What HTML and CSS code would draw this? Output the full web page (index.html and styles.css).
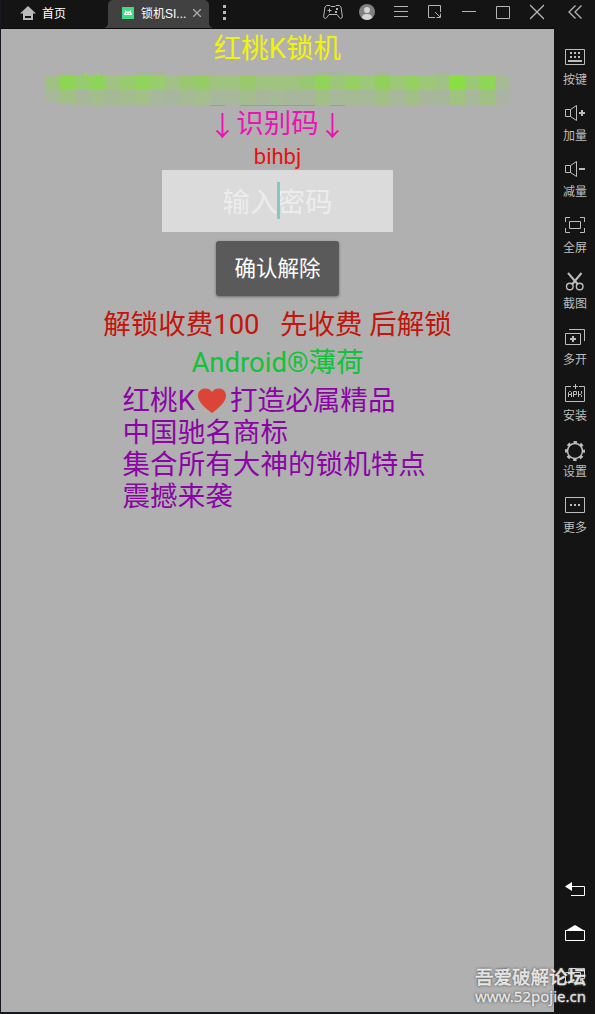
FILE: index.html
```html
<!DOCTYPE html>
<html lang="zh-CN">
<head>
<meta charset="utf-8">
<title>锁机</title>
<link rel="stylesheet" href="styles.css">
</head>
<body>
<div class="window">
  <div class="main">
    <header class="titlebar">
      <div class="home">
        <svg width="16" height="14" viewBox="0 0 16 14"><path fill="#b9b9b9" fill-rule="evenodd" d="M8 0L16 7.500H13V14H3V7.500H0ZM5 10H11V12H5Z"/></svg>
        <span>首页</span>
      </div>
      <div class="tab">
        <svg width="12" height="12" viewBox="0 0 12 12"><rect width="12" height="12" fill="#3ddc84"/><path fill="#fff" d="M2 8a4 3.800 0 0 1 8 0Z"/><path stroke="#fff" stroke-width=".8" d="M3 3l1 2M9 3L8 5"/><path fill="#3ddc84" d="M4 6h1v1H4zM7 6h1v1H7z"/></svg>
        <span class="tabname">锁机SI...</span>
        <svg class="tabclose" width="8" height="8" viewBox="0 0 8 8"><path d="M0 0L8 8M8 0L0 8" stroke="#aaa" stroke-width="1.300"/></svg>
      </div>
      <svg class="dots" width="3" height="15" viewBox="0 0 3 15"><path fill="#b9b9b9" d="M0 0h3v3H0zM0 6h3v3H0zM0 12h3v3H0z"/></svg>
      <div class="tools">
        <svg width="20" height="24" viewBox="0 0 20 24" fill="none" stroke="#b5b5b5"><path d="M3.500 5.500H7L8 6.500H12L13 5.500H16.500L18 7L19.300 16Q19.500 18.500 17.500 18.500Q16.500 18.500 14 14.500H6Q3.500 18.500 2.500 18.500Q.5 18.500 .7 16L2 7Z"/><path d="M4.500 10.500h4M6.500 8.500v4"/><path fill="#b5b5b5" stroke="none" d="M12 11h2v2h-2zM13 8h2v2h-2z"/></svg>
        <svg width="16" height="24" viewBox="0 0 16 24"><circle cx="8" cy="12" r="8" fill="#818181"/><circle cx="8" cy="10" r="3" fill="#d6d6d6"/><path fill="#d6d6d6" d="M3 18q0-4 5-4t5 4q-5 4-10 0"/></svg>
        <svg width="14" height="24" viewBox="0 0 14 24" stroke="#b5b5b5"><path d="M0 6.500h14M0 11.500h14M0 16.500h14"/></svg>
        <svg width="14" height="24" viewBox="0 0 14 24" fill="none" stroke="#b5b5b5"><path d="M7 17.500H.5V5.500H12.500V12M7 12L12 17M12.500 13.500V17.500H8.500"/></svg>
        <svg width="14" height="24" viewBox="0 0 14 24" stroke="#b5b5b5"><path d="M0 11.500h14"/></svg>
        <svg width="14" height="24" viewBox="0 0 14 24" fill="none" stroke="#b5b5b5"><path d="M.5 6.500h13v12H.5z"/></svg>
        <svg width="14" height="24" viewBox="0 0 14 24" stroke="#b5b5b5" stroke-width="1.300"><path d="M0 5L14 19M14 5L0 19"/></svg>
      </div>
    </header>
    <main class="screen">
      <h1 class="title">红桃K锁机</h1>
      <svg class="mosaic" width="465" height="34" viewBox="0 0 465 34" shape-rendering="crispEdges">
        <path fill="#a9b69f" d="M15 2h15v2H15zM90 0h30v4H90zM270 1h30v3H270zM330 0h15v4H330zM390 1h15v3H390z"/>
        <g id="cells"></g>
        <path fill="#8cdf4d" d="M39 2h3v2h-3zM52 2h3v2h-3z"/>
        <path fill="#b0b0b0" d="M0 31h10v1h16v2H0z"/>
        <path fill="#c084aa" d="M165 34h15v1h-15zM195 34h75v1h-75zM285 34h15v1h-15z"/>
      </svg>
      <div class="label"><i>↓</i>识别码<i>↓</i></div>
      <div class="code">bihbj</div>
      <div class="field">输入密码<span class="caret"></span></div>
      <button class="confirm">确认解除</button>
      <div class="fee">解锁收费100&nbsp;&nbsp; 先收费 后解锁</div>
      <div class="author">Android®薄荷</div>
      <div class="notes">
        <p>红桃K<svg class="heart" width="30" height="27" viewBox="0 0 30 27"><path fill="#db4437" d="M15 26C10 22 1 16 1 8.500C1 1 11 -1 15 5C19 -1 29 1 29 8.500C29 16 20 22 15 26Z"/></svg>打造必属精品</p>
        <p>中国驰名商标</p>
        <p>集合所有大神的锁机特点</p>
        <p>震撼来袭</p>
      </div>
    </main>
  </div>
  <aside class="sidebar">
    <svg class="collapse" width="14" height="14" viewBox="0 0 14 14" fill="none" stroke="#b5b5b5" stroke-width="1.300"><path d="M7.500 .5L1 7L7.500 13.500M13.500 .5L7 7L13.500 13.500"/></svg>
    <nav class="actions">
      <div class="action"><svg viewBox="0 0 20 20"><path d="M.5 2.500h19v15H.5z"/><path class="solid" d="M5 5h2v2H5zM9 5h2v2H9zM13 5h2v2h-2zM5 9h2v2H5zM9 9h2v2H9zM13 9h2v2h-2zM3 13h14v2H3z"/></svg><span>按键</span></div>
      <div class="action"><svg viewBox="0 0 20 20"><path d="M5.500 6.500H.5v7h5zM5.500 6.500L11.500 2.500v15L5.500 13.500"/><path class="solid" d="M14 9h2V7h2v2h2v2h-2v2h-2v-2h-2z"/></svg><span>加量</span></div>
      <div class="action"><svg viewBox="0 0 20 20"><path d="M5.500 6.500H.5v7h5zM5.500 6.500L11.500 2.500v15L5.500 13.500"/><path class="solid" d="M14 9h6v2h-6z"/></svg><span>减量</span></div>
      <div class="action"><svg viewBox="0 0 20 20"><path d="M4.500 6.500h11v7h-11zM.5 7V2.500H5M15 2.500h4.500V7M19.500 13v4.500H15M5 17.500H.5V13"/></svg><span>全屏</span></div>
      <div class="action"><svg viewBox="0 0 20 20"><path stroke-width="2" d="M3 2L13 13.500M16.500 2L7 13.500"/><circle cx="4.800" cy="15.500" r="3.300" stroke-width="1.400"/><circle cx="14.700" cy="15.500" r="3.300" stroke-width="1.400"/></svg><span>截图</span></div>
      <div class="action"><svg viewBox="0 0 20 20"><path d="M.5 6.500h15v11H.5zM4 2.500h15.500V14"/><path class="solid" d="M5 11h2V9h2v2h2v2H9v2H7v-2H5z"/></svg><span>多开</span></div>
      <div class="action"><svg viewBox="0 0 20 20"><path d="M6 3.500H.5v15h19v-15H14M8 3.500h5M10.500 1v5M3.500 14V9.500l1-1h1l1 1V14M3.500 11.500h3M8.500 14V8.500h3v3h-3M13.500 8v6M16.500 8v2.500l-1 1h-2M15.500 11.500l1 1V14"/></svg><span>安装</span></div>
      <div class="action gear"><svg viewBox="0 0 20 20"><circle cx="10" cy="10" r="7.500" stroke-width="1.500"/><circle cx="10" cy="10" r="8.600" stroke-width="2.800" stroke-dasharray="3.377 3.377" stroke-dashoffset="1.689"/></svg><span>设置</span></div>
      <div class="action"><svg viewBox="0 0 20 20"><path d="M.5 2.500h19v15H.5z"/><path class="solid" d="M5 9h2v2H5zM9 9h2v2H9zM13 9h2v2h-2z"/></svg><span>更多</span></div>
    </nav>
    <nav class="keys">
      <svg viewBox="0 0 20 16"><path fill="#fff" stroke="none" d="M0 4.500L7 0v9z"/><path d="M6 4.500h13.500v9H6"/></svg>
      <svg viewBox="0 0 20 16"><path fill="#fff" stroke="none" d="M0 6L10 0L20 6z"/><path d="M.5 5.500h19v10H.5z"/></svg>
      <svg viewBox="0 0 20 16"><path d="M.5 4.500h15v10H.5zM4 4.500v-4h15.500v10h-4"/></svg>
    </nav>
  </aside>
  <div class="watermark"><strong>吾爱破解论坛</strong><span>www.52pojie.cn</span></div>
</div>
<script src="mosaic.js"></script>
</body>
</html>
```
FILE: styles.css
```css
* { box-sizing: border-box; }
body { margin: 0; background: #141414; font-family: Roboto, "Noto Sans CJK SC", sans-serif; }
svg { display: block; flex: none; }
.window { position: relative; display: flex; width: 595px; height: 1014px; background: #141414; overflow: hidden; }
.main { display: flex; flex-direction: column; width: 554px; padding: 0 0 2px 1px; background: #15181e; }
.titlebar { display: flex; align-items: flex-start; height: 29px; background: #141414; border-bottom: 1px solid #0b0b0b; font: 12px/16px "Liberation Sans", "Noto Sans CJK SC", sans-serif; color: #fff; }
.home { display: flex; gap: 6px; width: 107px; padding: 6px 0 0 19px; }
.home span { line-height: 16px; }
.tab { position: relative; display: flex; width: 101px; height: 28px; padding: 7px 0 0 14px; background: #414141; border-radius: 5px 5px 0 0; }
.tab::before, .tab::after { content: ""; position: absolute; bottom: 0; width: 5px; height: 5px; }
.tab::before { left: -5px; background: radial-gradient(circle at 0 0, transparent 5px, #414141 5px); }
.tab::after { right: -5px; background: radial-gradient(circle at 100% 0, transparent 5px, #414141 5px); }
.tabname { width: 51px; padding-left: 7px; line-height: 14px; white-space: nowrap; }
.tabclose { margin: 2px 0 0 8px; }
.dots { margin: 5px 0 0 14px; }
.tools { display: flex; margin-left: 97px; gap: 20px; }
.tools svg:nth-child(1) { margin-right: -4px; }
.tools svg:nth-child(2) { margin-right: -1px; }
.screen { flex: 1; display: flex; flex-direction: column; align-items: center; background: #b0b0b0; font-size: 27.500px; }
.title { margin: 0; height: 42px; font-size: 27.500px; font-weight: 400; line-height: 40px; color: #f2f20d; }
.mosaic { overflow: visible; }
.label { display: flex; height: 38px; line-height: 38px; color: #ee12b4; }
.label i { width: 27.500px; text-align: center; font-style: normal; font-family: "Noto Sans CJK SC", sans-serif; }
.code { height: 27px; font-size: 22px; line-height: 27px; color: #e91010; }
.field { position: relative; width: 231px; height: 62px; line-height: 65px; text-align: center; color: #ededed; background: #dbdbdb; }
.caret { position: absolute; left: 115px; top: 12px; width: 3px; height: 37px; background: #80cbc0; }
.confirm { width: 123px; height: 55px; margin-top: 9px; padding: 0; border: 0; border-radius: 3px; background: #5a5a5b; color: #fff; font: 21.500px/56px Roboto, "Noto Sans CJK SC", sans-serif; box-shadow: 0 1px 3px rgba(0,0,0,.4); }
.fee { margin-top: 10px; height: 38px; line-height: 38px; color: #c3150b; white-space: nowrap; }
.author { height: 38px; line-height: 38px; color: #12c239; }
.notes { width: 310px; margin-top: 2px; color: #8b05a5; }
.notes p { display: flex; align-items: center; height: 32.200px; margin: 0; white-space: nowrap; line-height: 33px; letter-spacing: .08px; }
.heart { margin: 0 3px 0 2px; }
.sidebar { display: flex; flex-direction: column; width: 41px; color: #bdbdbd; }
.collapse { margin: 5px 0 0 14px; }
.actions { margin-top: 28px; }
.action { display: flex; flex-direction: column; align-items: center; height: 56px; padding-left: 1px; font: 12px/16px "Noto Sans CJK SC", sans-serif; }
.action svg { width: 20px; height: 20px; fill: none; stroke: #bdbdbd; }
.action span { margin-top: 4px; }
.gear svg { margin-top: 2px; }
.gear span { margin-top: 2px; }
.action .solid { fill: #bdbdbd; stroke: none; }
.keys { display: flex; flex-direction: column; gap: 27px; margin: 331px 0 0 11px; }
.keys svg { width: 20px; height: 16px; fill: none; stroke: #fff; }
.watermark { position: absolute; right: 9px; bottom: 8px; display: flex; flex-direction: column; align-items: center; color: rgba(255,255,255,.83); text-shadow: 0 0 2px #555, 0 0 3px #555; font-family: "Noto Sans", "Noto Sans CJK SC", sans-serif; white-space: nowrap; }
.watermark strong { font-size: 18.500px; line-height: 21px; font-weight: 500; -webkit-text-stroke: .3px rgba(255,255,255,.8); }
.watermark span { font-size: 15px; line-height: 19px; -webkit-text-stroke: .3px rgba(255,255,255,.8); }
```
FILE: mosaic.js
```javascript
const rows = [
  "a0c084 8fd555 98ca70 8ed45a a0c283 98ca6e 90d45c 98cc6c a2c088 9ac872 94cc66 a0c480 a0c480 98ca6c 9fc480 a0c480 a0c480 98c870 90d45a 9cc67a 94d062 9cc87a 92d05e 9cc878 94d064 9cc878 a0c284 8ade44 9ac874 8ed658 a6ba94",
  "a6b998 a0c084 a8b79c a4bd8c a6b996 a4bd8e a2c088 a8b89c a9b69f a6ba96 a4be8c a8b89c a8b89c a4bd8e a8b79c a6ba96 a8b79c a8b79c a2c084 a8b89a a6ba96 a6b998 a2c084 a8b89a a2c086 a8b79c a8b79c a0c480 a8b89a a0c084 abb3a5"
];
const group = document.getElementById("cells");
rows.forEach((row, y) => row.split(" ").forEach((color, x) => {
  const cell = document.createElementNS("http://www.w3.org/2000/svg", "rect");
  cell.setAttribute("x", x * 15);
  cell.setAttribute("y", 4 + y * 15);
  cell.setAttribute("width", 15);
  cell.setAttribute("height", 15);
  cell.setAttribute("fill", "#" + color);
  group.append(cell);
}));
```
